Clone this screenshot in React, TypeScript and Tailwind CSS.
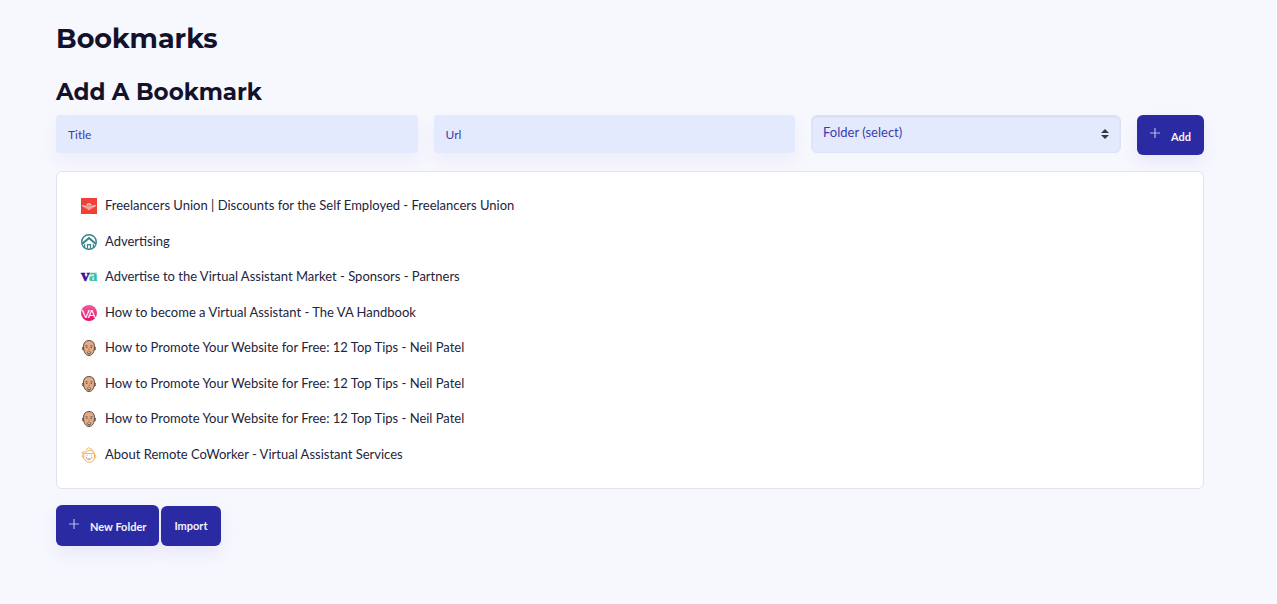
import { useState } from 'react'
import type { ReactNode } from 'react'

interface Bookmark {
  title: string
  url: string
  icon: ReactNode
}

function UnionIcon() {
  return (
    <svg viewBox="0 0 16 16" className="size-4 shrink-0" aria-hidden="true">
      <rect width="16" height="16" fill="#ef4136" />
      <path d="M.8 7 3 7.600l2-.2L6.200 6h3.600L11 7.400l2 .2L15.200 7l-1 1.700-2.400 1L10.500 11 8 11.700 5.500 11 4.200 9.700l-2.400-1z" fill="#f59a90" />
      <path d="M5.700 6.600 8 5.400l2.300 1.200M1.500 7.600l3 1M14.500 7.600l-3 1M6 9h4M7 11h2" stroke="#fff" strokeWidth="0.7" fill="none" />
      <path d="M5.500 8h5M6.500 10h3" stroke="#ef4136" strokeWidth="0.5" />
    </svg>
  )
}

function HouseIcon() {
  return (
    <svg viewBox="0 0 16 16" className="size-4 shrink-0" fill="none" stroke="#35828a" aria-hidden="true">
      <circle cx="8" cy="8" r="7.300" strokeWidth="1.400" />
      <path d="M1.300 9.800 8 4l6.700 5.800" strokeWidth="2" />
      <path d="M3.600 10.200v3.600M12.400 10.200v3.600M6.500 14.800v-4.100h3v4.100" strokeWidth="1.200" />
    </svg>
  )
}

function VaIcon() {
  return (
    <svg viewBox="0 0 16 16" className="size-4 shrink-0 overflow-visible" aria-hidden="true">
      <rect x="8" y="3" width="8" height="9" fill="#c9eee7" />
      <text x="0" y="12" fontFamily="Liberation Serif, serif" fontSize="17" fontWeight="700" fill="#35109a" stroke="#35109a" strokeWidth="0.5">v</text>
      <text x="8" y="12" fontFamily="Liberation Serif, serif" fontSize="17" fontWeight="700" fill="#35bfa6">a</text>
    </svg>
  )
}

function HandbookIcon() {
  return (
    <svg viewBox="0 0 16 16" className="size-4 shrink-0 overflow-visible" aria-hidden="true">
      <defs>
        <linearGradient id="handbook" x1="0" y1="0" x2="0" y2="1">
          <stop offset="0" stopColor="#f75a9e" />
          <stop offset="1" stopColor="#e0106c" />
        </linearGradient>
      </defs>
      <circle cx="8" cy="8" r="8" fill="url(#handbook)" />
      <text x="0.800" y="12.500" fontFamily="Lato, sans-serif" fontSize="12" fill="#fff">V</text>
      <text x="6.800" y="12.500" fontFamily="Lato, sans-serif" fontSize="12" fill="#fff">A</text>
    </svg>
  )
}

function FaceIcon() {
  return (
    <svg viewBox="0 0 16 16" className="size-4 shrink-0" aria-hidden="true">
      <ellipse cx="2.200" cy="8.400" rx="0.800" ry="1.800" fill="#d99a76" stroke="#4b443f" strokeWidth="0.700" />
      <ellipse cx="13.800" cy="8.400" rx="0.800" ry="1.800" fill="#d99a76" stroke="#4b443f" strokeWidth="0.700" />
      <path d="M8 .5c3.700 0 5.500 2.400 5.500 5.900 0 4.900-1.700 9.100-5.500 9.100s-5.500-4.200-5.500-9.100C2.500 2.900 4.300.5 8 .5z" fill="#e5ab86" stroke="#4b443f" strokeWidth="0.900" />
      <path d="M4.200 5.900c.8-.5 1.800-.5 2.600 0M9.200 5.900c.8-.5 1.800-.5 2.600 0" stroke="#6b4f40" strokeWidth="0.700" fill="none" />
      <path d="M5 7.200h1.300M9.700 7.200H11" stroke="#2e2e35" strokeWidth="0.900" />
      <path d="M8.300 7.500v2M7 10h2.200" stroke="#b87a5c" strokeWidth="0.700" />
      <path d="M5.800 12c1.400-1 3-1 4.400 0-.2 1.500-1 2.500-2.200 2.500S6 13.500 5.800 12z" fill="#77635a" />
      <path d="M6.800 12.300h2.400" stroke="#f3ece6" strokeWidth="0.800" />
    </svg>
  )
}

function CoworkerIcon() {
  return (
    <svg viewBox="0 0 16 16" className="size-4 shrink-0" fill="none" stroke="#f5a544" strokeWidth="0.900" aria-hidden="true">
      <path d="M1 5.600c1.600-1.200 3-.2 4.400-1C7 3.600 9.500 3 11.500 4l2 2.200c-3.500.8-7 .4-9.700-.1C2.500 7 1.300 6.800 1 5.600z" />
      <path d="M4.500 3.300C5.800 1.300 7 2.300 7.500.6c1 1.400 3.500.7 4.500 3.200" />
      <path d="M2.800 7.200v3.600c.8 2.500 3 4.500 5.700 4.500 3 0 5-2.400 5-5V6.500" />
      <path d="M2.200 7.500C.6 8 .8 10.500 2.600 11M13.500 7.500c2 .2 1.700 3.400 0 3.700" />
      <path d="M5 9.600 6 12l2 1 2-1 1-2.400M7 11.300l1 .7 1-.7" stroke="#a8a3a0" strokeWidth="0.800" />
      <path d="M5.500 8.300h1M9.700 8.300h1" stroke="#b5aaa0" />
    </svg>
  )
}

function PlusIcon() {
  return (
    <svg viewBox="0 0 10 10" className="mb-1 size-[10px] shrink-0" stroke="#b9b8e0" strokeWidth="1.200" aria-hidden="true">
      <path d="M5 0v10M0 5h10" />
    </svg>
  )
}

const neilPatel = 'How to Promote Your Website for Free: 12 Top Tips - Neil Patel'

const bookmarks: Bookmark[] = [
  { title: 'Freelancers Union | Discounts for the Self Employed - Freelancers Union', url: '#freelancers', icon: <UnionIcon /> },
  { title: 'Advertising', url: '#advertising', icon: <HouseIcon /> },
  { title: 'Advertise to the Virtual Assistant Market - Sponsors - Partners', url: '#sponsors', icon: <VaIcon /> },
  { title: 'How to become a Virtual Assistant - The VA Handbook', url: '#handbook', icon: <HandbookIcon /> },
  { title: neilPatel, url: '#tips-1', icon: <FaceIcon /> },
  { title: neilPatel, url: '#tips-2', icon: <FaceIcon /> },
  { title: neilPatel, url: '#tips-3', icon: <FaceIcon /> },
  { title: 'About Remote CoWorker - Virtual Assistant Services', url: '#coworker', icon: <CoworkerIcon /> },
]

const inputClass =
  'h-[38px] w-full min-w-0 rounded bg-[#e4eafd] px-3 text-xs text-[#2b2ba0] shadow-[0_8px_16px_rgba(80,60,200,0.06)] placeholder:text-[#3c3cac] focus:outline-none focus:ring-2 focus:ring-[#2b2ba0]'
const buttonClass =
  'flex items-center rounded-md bg-[#2a2aa2] px-[13px] text-[11px] font-bold text-[#f3f3fb] shadow-[0_8px_16px_rgba(80,60,200,0.08)] hover:bg-[#20208a]'

export default function App() {
  const [title, setTitle] = useState('')
  const [url, setUrl] = useState('')

  return (
    <main className="min-h-screen bg-[#f7f7fe] pt-[21px] pr-[73px] pb-14 pl-14 font-['Lato',sans-serif] text-[#12122c]">
      <h1 className="font-['Montserrat','Inter',sans-serif] text-[27px] leading-9 font-bold">Bookmarks</h1>
      <h2 className="mt-[19px] font-['Montserrat','Inter',sans-serif] text-[23px] leading-8 font-bold">Add A Bookmark</h2>

      <form
        className="mt-[7px] grid grid-cols-[7fr_7fr_6fr_auto] items-start gap-4"
        onSubmit={(e) => e.preventDefault()}
      >
        <input
          type="text"
          aria-label="Title"
          placeholder="Title"
          value={title}
          onChange={(e) => setTitle(e.target.value)}
          className={inputClass}
        />
        <input
          type="text"
          aria-label="Url"
          placeholder="Url"
          value={url}
          onChange={(e) => setUrl(e.target.value)}
          className={inputClass}
        />
        <div className="relative min-w-0">
          <select
            aria-label="Folder"
            className="block h-[38px] w-full appearance-none rounded-md border border-[#dce3f6] bg-[#e4eafd] px-[11px] pb-0.5 text-[13px] text-[#3c3cac] shadow-[inset_0_1px_2px_rgba(0,0,0,0.07)]"
          >
            <option>Folder (select)</option>
          </select>
          <svg
            viewBox="0 0 8 10"
            className="pointer-events-none absolute top-[14px] right-3 h-[10px] w-2"
            fill="#343a40"
            aria-hidden="true"
          >
            <path d="M4 0 0 4h8zM4 10 0 6h8z" />
          </svg>
        </div>
        <button type="submit" className={`${buttonClass} h-10 gap-[11px]`}>
          <PlusIcon />
          <span className="pt-1">Add</span>
        </button>
      </form>

      {/* Lista de marcadores */}
      <ul className="mt-4 grid min-h-[318px] auto-rows-fr rounded-md border border-[#e2e2ef] bg-white px-6 py-4">
        {bookmarks.map((bookmark) => (
          <li key={bookmark.url} className="flex items-center">
            <a href={bookmark.url} className="flex items-center gap-2 pt-px text-[13px] leading-5 text-[#24243c] hover:underline">
              {bookmark.icon}
              <span className="pb-0.5">{bookmark.title}</span>
            </a>
          </li>
        ))}
      </ul>

      <div className="mt-4 flex items-end gap-0.5">
        <button type="button" className={`${buttonClass} h-[41px] gap-[11px]`}>
          <PlusIcon />
          <span className="pt-1">New Folder</span>
        </button>
        <button type="button" className={`${buttonClass} h-10`}>Import</button>
      </div>
    </main>
  )
}
